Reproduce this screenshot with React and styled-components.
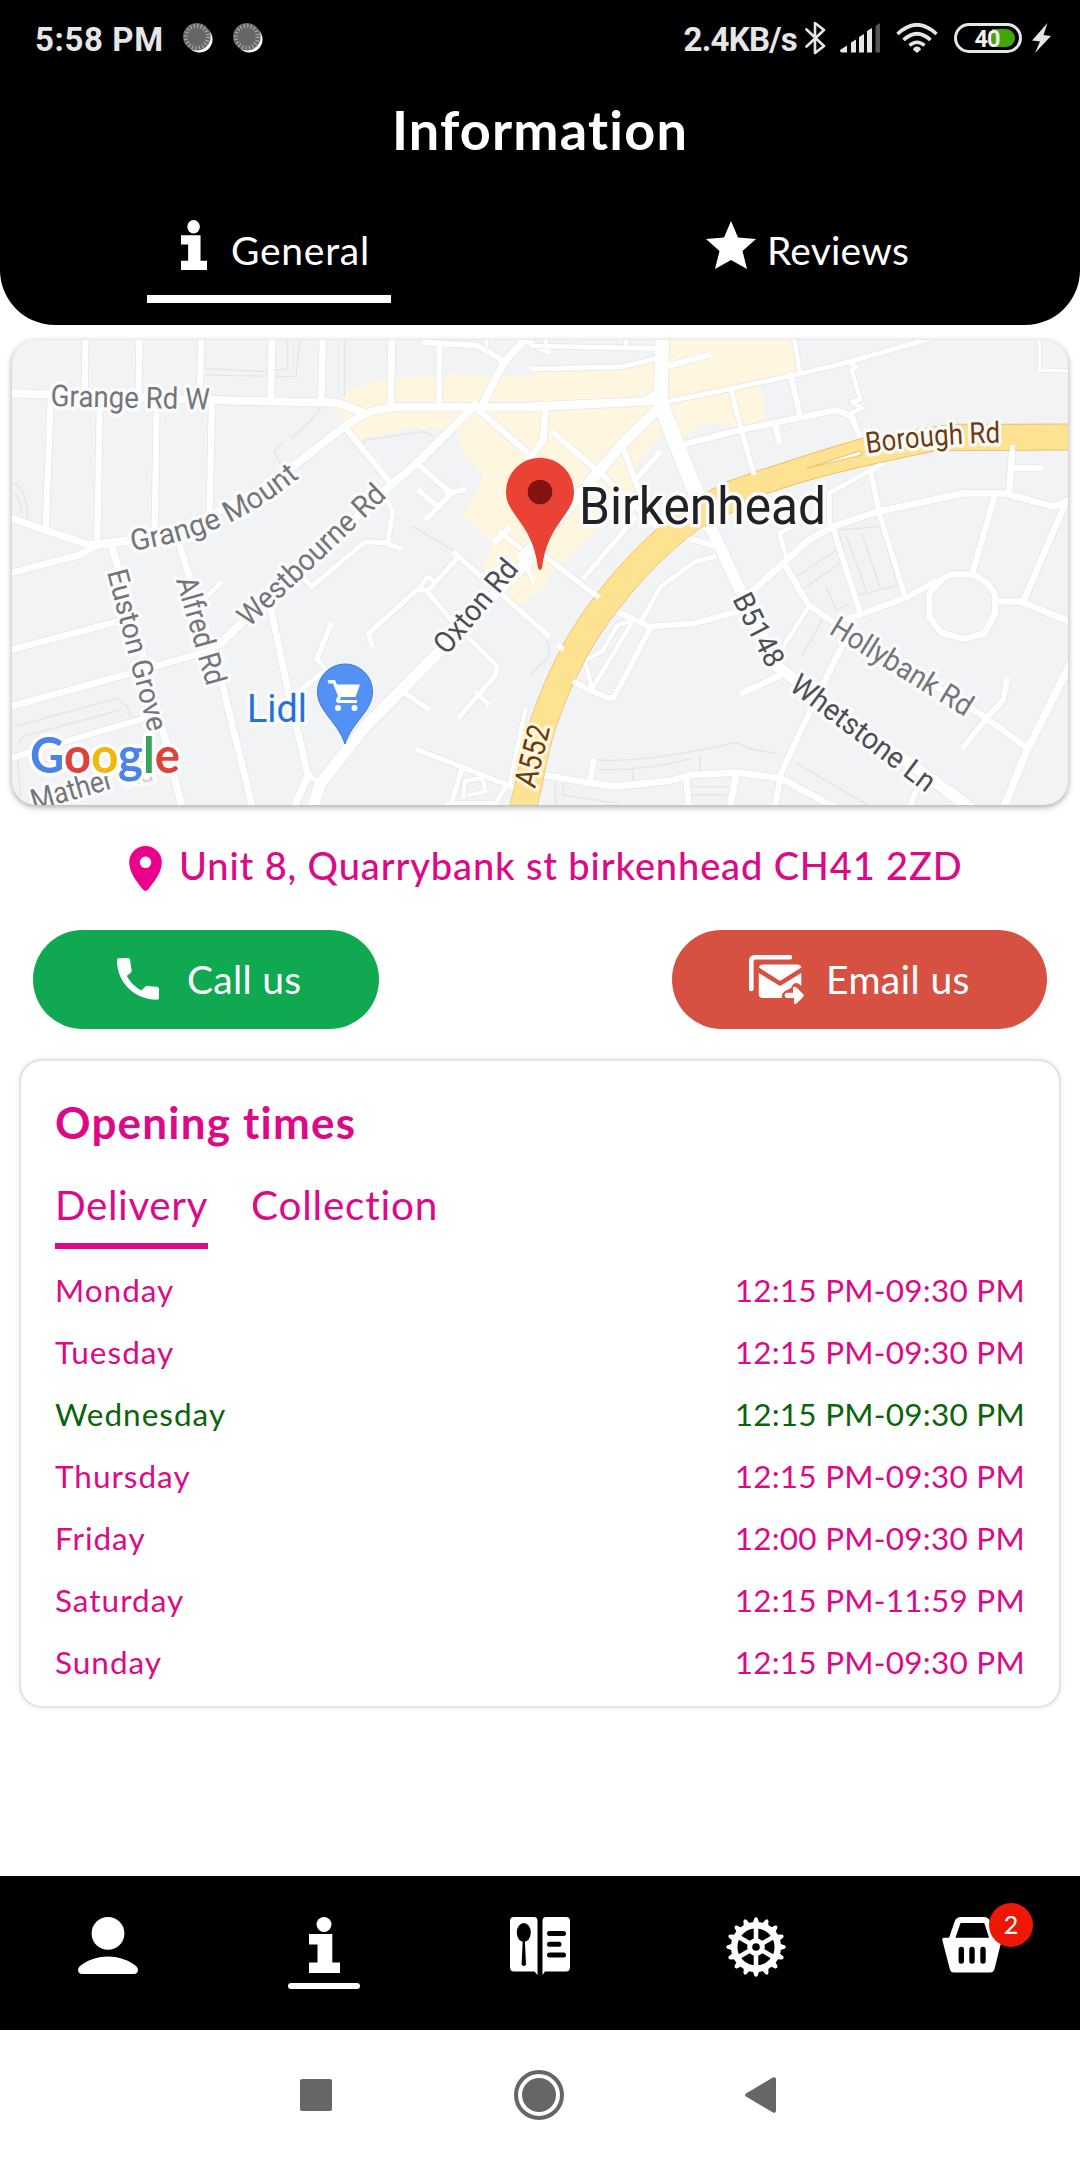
import React from "react";
import styled, { createGlobalStyle } from "styled-components";

const PINK = "#dc0a86";

const GlobalStyle = createGlobalStyle`
  * { box-sizing: border-box; }
  body { margin: 0; background: #fff; font-family: Lato, "Noto Sans", sans-serif; }
`;

const Page = styled.div`
  display: flex;
  flex-direction: column;
  width: 1080px;
  height: 2160px;
  overflow: hidden;
  background: #fff;
`;

const Label = styled.span`
  white-space: nowrap;
  font-variant-ligatures: none;
  letter-spacing: ${(p) => p.$track || 0}px;
`;

/* ---------- header ---------- */
const Header = styled.header`
  height: 325px;
  background: #000;
  color: #fff;
  border-radius: 0 0 55px 55px;
`;

const StatusBar = styled.div`
  display: flex;
  align-items: center;
  justify-content: space-between;
  height: 76px;
  padding: 0 29px 0 35px;
  font: 700 33px/40px Roboto, sans-serif;
  color: #e6e6e6;
`;

const StatusGroup = styled.div`
  display: flex;
  align-items: center;
  svg { display: block; flex: none; }
`;

const StatusText = styled(Label)`
  padding-top: 3px;
`;

const Spacer = styled.span`
  width: ${(p) => p.$w}px;
`;

const Title = styled.h1`
  margin: 0;
  padding-top: 2px;
  text-align: center;
  font-size: 54px;
  line-height: 104px;
  font-weight: 700;
`;

const Tabs = styled.nav`
  display: grid;
  grid-template-columns: 1fr 1fr;
  padding-right: 4px;
  justify-items: center;
`;

const Tab = styled.div`
  display: flex;
  align-items: center;
  width: 244px;
  height: 121px;
  padding: 22px 0 0 ${(p) => p.$pad}px;
  gap: ${(p) => p.$gap}px;
  border-bottom: 8px solid ${(p) => (p.$active ? "#fff" : "transparent")};
  font-size: 39px;
  svg { flex: none; margin-bottom: 10px; }
`;

/* ---------- body ---------- */
const MapCard = styled.section`
  height: 465px;
  margin: 15px 12px 0;
  border-radius: 24px;
  overflow: hidden;
  background: #f1f3f4;
  box-shadow: 0 2px 6px rgba(0, 0, 0, 0.35);
  flex: none;
  svg { display: block; }
`;

const Address = styled.div`
  display: flex;
  align-items: center;
  height: 119px;
  padding-left: 129px;
  gap: 17px;
  font-size: 38px;
  font-weight: 500;
  color: ${PINK};
  svg { margin-top: 8px; flex: none; }
`;

const Actions = styled.div`
  display: flex;
  justify-content: space-between;
  margin-top: 6px;
  padding: 0 33px;
`;

const PillButton = styled.button`
  display: flex;
  align-items: center;
  width: ${(p) => p.$w}px;
  height: 99px;
  padding: 0 0 1px ${(p) => p.$pad}px;
  gap: ${(p) => p.$gap}px;
  border: 0;
  border-radius: 50px;
  background: ${(p) => p.$bg};
  color: #fff;
  font: 400 39px Lato, sans-serif;
`;

const HoursCard = styled.section`
  margin: 32px 21px 0;
  padding: 31px 34px 13px 34px;
  border-radius: 21px;
  background: #fff;
  color: ${PINK};
  box-shadow: 0 0 0 2px #e4e4e4, 0 0 5px 3px #eee;
`;

const HoursTitle = styled.h2`
  margin: 0;
  font-size: 44px;
  line-height: 60px;
  font-weight: 700;
`;

const HoursTabs = styled.div`
  display: flex;
  gap: 43px;
  margin: 23px 0 10px;
`;

const HoursTab = styled.div`
  width: ${(p) => (p.$w ? `${p.$w}px` : "auto")};
  height: 74px;
  font-size: 40.5px;
  line-height: 60px;
  border-bottom: 6px solid ${(p) => (p.$active ? PINK : "transparent")};
`;

const DayRow = styled.div`
  display: flex;
  justify-content: space-between;
  font-size: 31.5px;
  line-height: 62px;
  color: ${(p) => (p.$today ? "#0a640a" : PINK)};
`;

/* ---------- footer ---------- */
const BottomNav = styled.nav`
  display: grid;
  grid-template-columns: repeat(5, 1fr);
  justify-items: center;
  align-items: start;
  flex: none;
  height: 154px;
  margin-top: auto;
  padding-top: 41px;
  background: #000;
`;

const NavItem = styled.div`
  position: relative;
  display: flex;
  flex-direction: column;
  align-items: center;
  gap: 10px;
  svg { display: block; }
`;

const ActiveBar = styled.span`
  width: 72px;
  height: 6px;
  border-radius: 3px;
  background: #fff;
`;

const Badge = styled.span`
  position: absolute;
  left: 47px;
  top: -14px;
  width: 44px;
  height: 44px;
  border-radius: 50%;
  background: #ee1704;
  color: #fff;
  text-align: center;
  font-size: 25px;
  line-height: 43px;
`;

const SystemBar = styled.div`
  display: flex;
  align-items: center;
  gap: 181.5px;
  flex: none;
  height: 130px;
  padding-left: 300px;
  background: #fff;
  svg { display: block; }
`;

/* ---------- icons ---------- */
const Bubble = () => (
  <svg width="30" height="30" viewBox="0 0 30 30">
    <circle cx="16.5" cy="16.5" r="13" fill="#fff" />
    <circle cx="13.8" cy="13.8" r="13.8" fill="#666" />
    <circle cx="13.8" cy="13.8" r="11" fill="none" stroke="#aaa" strokeWidth="4" strokeDasharray="1.2 2.26" />
  </svg>
);

const Bluetooth = () => (
  <svg width="21" height="34" viewBox="0 0 21 34" fill="none" stroke="#e6e6e6" strokeWidth="2.6">
    <path d="M1.5 8.5 L19 25 L10 32 V2 L19 9 L1.5 25.5" strokeLinejoin="round" strokeLinecap="round" />
  </svg>
);

const Signal = () => (
  <svg width="40" height="30" viewBox="0 0 40 30" fill="#e6e6e6">
    <path d="M0 27 L7 22.5 V29.5 H2 Q0 29.5 0 27Z M11 19.5 L16 16.5 V29.5 H11Z M19 14 L24 11 V29.5 H19Z M27 8 L32 5 V29.5 H27Z" />
    <path d="M35.500 3 L40 0 V29.500 H35.500Z" fill="#555" />
  </svg>
);

const Wifi = () => (
  <svg width="42" height="30" viewBox="0 0 42 30" fill="none" stroke="#e6e6e6" strokeWidth="3.6">
    <path d="M1.500 11 Q21 -7.500 40.500 11" />
    <path d="M7.500 17 Q21 4.500 34.500 17" />
    <path d="M13.500 22.500 Q21 16 28.500 22.500" />
    <path d="M17 26.500 A4.200 4.200 0 0 1 25 26.500 L21 30Z" fill="#e6e6e6" stroke="none" />
  </svg>
);

const Battery = () => (
  <svg width="68" height="30" viewBox="0 0 68 30">
    <rect x="1.500" y="1.500" width="65" height="27" rx="13.500" fill="none" stroke="#e6e6e6" strokeWidth="3" />
    <path d="M38 6 H52 A9 9 0 0 1 52 24 H38Z" fill="#43a608" />
    <text x="20.500" y="23.500" fontFamily="Roboto" fontWeight="700" fontSize="23.500" fill="#f0f0f0" textLength="26">40</text>
  </svg>
);

const Bolt = () => (
  <svg width="19" height="30" viewBox="0 0 19 30" fill="#e6e6e6">
    <path d="M15.500 0 L0 17.500 L8 18.500 L3 30 L19 13 L11.500 12Z" />
  </svg>
);

const InfoIcon = ({ w, h }) => (
  <svg width={w} height={h} viewBox="0 0 31 56" preserveAspectRatio="none" fill="#fff">
    <circle cx="15" cy="7.500" r="7.500" />
    <path d="M0 17 H23.300 V45.500 H31 V56 H0 V45.500 H8.500 V27.500 H0Z" />
  </svg>
);

const Star = () => (
  <svg width="50" height="48" viewBox="0 0 50 48" fill="#fff">
    <path d="M25 0 L32 16.500 L50 18 L36.500 30 L41 48 L25 39 L9 48 L13.500 30 L0 18 L18 16.500Z" />
  </svg>
);

const Pin = () => (
  <svg width="33" height="45" viewBox="0 0 33 45">
    <path fillRule="evenodd" fill="#eb008b" d="M16.500 0 A16.300 16.300 0 0 1 32.800 16.300 C32.800 26 26 35 18.800 43.800 Q16.500 46 14.200 43.800 C7 35 .2 26 .2 16.300 A16.300 16.300 0 0 1 16.500 0Z M16.500 10.500 A5.800 5.800 0 1 0 16.500 22.100 A5.800 5.800 0 1 0 16.500 10.500Z" />
  </svg>
);

const Phone = () => (
  <svg width="42" height="42" viewBox="0 0 42 42" fill="#fff">
    <path d="M2.500 0 H11 Q13 0 13.200 2 Q13.400 7.500 14.500 11 Q15 13 14 14.500 L9.800 18 C13.500 24.500 18 29 24.500 32.500 L28.500 28.500 Q29.800 27.400 31.500 28 Q35 28.800 40 28.800 Q42 29 42 31 V39.500 Q42 41.700 40 41.700 C18 41.700 0 25 0 2.500 Q0 0 2.500 0Z" />
  </svg>
);

const Mail = () => (
  <svg width="55" height="49" viewBox="0 0 55 49">
    <path d="M2.300 34 V6 Q2.300 2.300 6 2.300 H41" fill="none" stroke="#fff" strokeWidth="4.600" strokeLinecap="round" />
    <path d="M10 12.500 Q10.500 9.500 14 9.500 H48 Q52 9.500 52.300 12.500 L31 26Z" fill="#fff" />
    <path d="M9.800 18 L31 31 L52.300 18 V31 Q49 27 45 28.500 Q43 30 42 33 L36 36 Q32 39 33 43 H14 Q9.800 43 9.800 39Z" fill="#fff" />
    <path d="M38 37.800 H44 V32 Q46 31 48 33 L54 39 Q55.500 40.500 54 42 L48 48 Q46.500 49.500 45 48.500 V43 H38 Q35.500 42.500 35.500 40.300 Q35.500 38 38 37.800Z" fill="#fff" />
  </svg>
);

const Person = () => (
  <svg width="60" height="57" viewBox="0 0 60 57" fill="#fff">
    <circle cx="30" cy="16.400" r="16.400" />
    <path d="M30 39.500 C42 39.500 52 44 58 49 Q60 51 60 53 Q59.500 57 56 57 H4 Q.5 57 0 53 Q0 51 2 49 C8 44 18 39.500 30 39.500Z" />
  </svg>
);

const MenuBook = () => (
  <svg width="60" height="58" viewBox="0 0 60 58" fill="#fff">
    <path d="M4 0 H24 Q27.500 0 27.500 4 V58 L24.500 54.500 H4 Q0 54.500 0 50 V4 Q0 0 4 0Z" />
    <path d="M36 0 H56 Q60 0 60 4 V50 Q60 54.500 56 54.500 H35 L32.500 58 V4 Q32.500 0 36 0Z" />
    <ellipse cx="13.800" cy="15.500" rx="7" ry="9.500" fill="#000" />
    <path d="M12.800 22 H14.800 L16 47.500 Q13.800 50.500 11.600 47.500Z" fill="#000" />
    <path d="M39.500 16.500 H53.500 M39.500 27.300 H49 M39.500 38 H53.500" stroke="#000" strokeWidth="5" strokeLinecap="round" />
  </svg>
);

const Gear = () => {
  const teeth = Array.from({ length: 16 }, (_, i) => i * 22.5);
  const spokes = [0, 60, 120, 180, 240, 300];
  return (
    <svg width="60" height="60" viewBox="-30 -30 60 60" stroke="#fff" fill="none">
      <circle r="21.800" strokeWidth="6.500" />
      {teeth.map((a) => (
        <path key={a} d="M-3.600 -23 L-1.700 -28.600 Q0 -31 1.700 -28.600 L3.600 -23Z" fill="#fff" stroke="none" transform={`rotate(${a})`} />
      ))}
      {spokes.map((a) => (
        <path key={a} d="M0 -6 V-20" strokeWidth="4.600" transform={`rotate(${a})`} />
      ))}
      <circle r="6.300" strokeWidth="5" />
    </svg>
  );
};

const Basket = () => (
  <svg width="60" height="56" viewBox="0 0 60 56">
    <path d="M9.500 23 L15.500 5.500 Q16.300 3 19 3 H42 Q44.500 3 45.300 5.500 L51 23" fill="none" stroke="#fff" strokeWidth="6" />
    <path d="M1.500 20.800 H58.500 Q60 21 59.700 23 L52.500 52 Q51.500 55.500 48 55.500 H12 Q8.500 55.500 7.800 52 L.3 23 Q0 21 1.500 20.800Z" fill="#fff" />
    <path d="M19.300 32.500 V44 M30 32.500 V44 M41 32.500 V44" stroke="#000" strokeWidth="5.400" strokeLinecap="round" />
  </svg>
);

/* ---------- map ---------- */
/* Each tile keeps its roads as [width, path] in the tile's own grid. */
const TILE_W = [
  [24, "M20 190 L140 193 L600 210 L980 218 L1060 250"],
  [24, "M280 645 L400 627 Q640 570 850 410 L1000 290 L1060 250 Q1110 233 1160 230 L1590 230"],
  [18, "M248 15 L246 195"], [18, "M405 15 L402 200"], [18, "M584 15 L580 205"],
  [20, "M790 15 L786 215"], [19, "M937 15 L933 218"], [20, "M1138 15 L1134 232"],
  [17, "M1276 50 L1275 230"], [17, "M1235 38 L1385 46 L1465 95"], [10, "M1412 20 V45"],
  [22, "M1530 20 L1462 100 L1395 235"], [18, "M1520 30 L1590 65"],
  [18, "M147 200 L133 600"], [18, "M290 205 L282 640"], [18, "M455 215 L449 610"], [18, "M615 215 L608 570"],
  [22, "M20 560 L130 600 L260 645 L400 627"], [20, "M20 732 L230 675 L285 645"],
  [22, "M325 650 L345 720 L410 960 L480 1230 L530 1440"],
  [20, "M520 640 L640 1040 L735 1440"],
  [20, "M20 963 L350 872"], [20, "M20 1132 L380 1030 L600 965 L640 940"],
  [24, "M640 940 L720 860 L1130 470 L1210 400 L1380 225"],
  [18, "M20 1290 L110 1258 L420 1165"], [15, "M590 810 L640 760"],
  [18, "M1000 290 L1130 455"], [17, "M1210 400 L1310 490 L1240 565"], [17, "M1300 490 L1345 480"],
  [17, "M1220 485 L1265 525"], [15, "M1120 500 L1140 545 L1125 640 L1160 655"],
  [15, "M1125 638 L1060 635 L905 770 L882 745"],
  [20, "M785 830 L830 1050 L895 1340"], [22, "M895 1335 L850 1440"], [14, "M890 1340 L940 1355"],
  [34, "M905 1440 L930 1360 L1060 1190 L1270 970 L1590 630"],
  [16, "M960 885 L920 985 L945 1020 L855 1095"],
  [15, "M1330 680 L1245 780 L1210 780 L1070 910 L1080 945"], [14, "M1215 780 L1240 740 L1265 755"],
  [15, "M1240 785 L1310 870 L1445 1010 L1435 1040 L1335 1160"], [15, "M1385 1090 L1415 1120"],
  [16, "M1320 670 L1590 915"], [16, "M1170 1085 L1240 1135"], [20, "M1395 245 L1545 380"],
  [15, "M1215 1260 L1490 1372"], [13, "M1480 1360 L1525 1140"], [15, "M1340 1320 L1305 1440"],
  [13, "M1300 1420 L1440 1420 L1465 1375"], [12, "M1345 1400 L1350 1352 L1400 1345 L1410 1385 L1360 1395"],
  [16, "M1455 610 L1570 700"], [20, "M1440 632 L1475 598"], [16, "M1520 690 L1550 755"],
];

const TILE_E = [
  [26, "M-20 230 L330 213"], [14, "M-20 48 L340 55"], [15, "M-20 117 L240 110 L340 85"],
  [12, "M17 20 V50"], [12, "M250 20 V50"],
  [40, "M355 15 L350 230"], [18, "M365 110 L490 75"], [22, "M300 215 L350 180"],
  [15, "M370 215 L560 175 L760 130 L900 95 L1170 15"],
  [14, "M737 20 L755 130"], [17, "M728 135 L755 255"],
  [13, "M900 100 L920 112 L905 120 L930 208 L905 215 L935 235 L905 248"],
  [19, "M410 345 L580 300 L860 240 L905 260 L930 325"], [18, "M685 290 L695 335"], [15, "M555 180 L585 300 L620 430"],
  [46, "M350 220 L430 430 L490 580"],
  [34, "M490 580 L590 800 L690 1010 L830 1120 L1180 1380 L1270 1450"],
  [32, "M345 235 L250 330 L165 430 L60 560 L-50 680"],
  [18, "M40 310 L170 425 L350 600"], [18, "M240 350 L290 490"], [16, "M345 370 L285 440"],
  [15, "M275 565 L130 740"], [17, "M10 675 L165 800"], [20, "M15 240 L10 330 L-30 385"],
  [14, "M505 680 L450 695 L350 770 L290 880"], [17, "M228 848 L320 890 L450 880 L590 840"],
  [13, "M265 880 L155 1070"], [17, "M322 890 L215 1102 L195 1105 L95 1055"],
  [13, "M260 875 L225 885 L180 965 L130 990 L150 1070"], [18, "M430 625 L500 645"],
  [20, "M615 785 L780 630 L850 590 L980 545 L1230 490 L1350 490 L1490 530 L1550 505"],
  [14, "M990 403 L840 490 L840 590"], [16, "M960 420 L985 550 L1060 800"],
  [17, "M850 590 L930 850"], [14, "M715 680 L695 610 L730 590"], [18, "M900 865 L1070 800 L1145 755"],
  [19, "M1165 750 L1195 733 L1255 733 L1295 755 L1320 790 L1322 850 L1290 910 L1230 927 L1165 908 L1130 860 L1130 790 Z"],
  [18, "M1320 500 L1255 730"], [19, "M1525 520 L1403 815"], [20, "M1325 813 L1395 815 L1550 880"],
  [19, "M1372 350 L1362 490"], [18, "M1375 415 L1450 413"],
  [19, "M708 700 L780 825 L870 890 L1290 1160 L1412 1252"], [13, "M780 830 L700 960"],
  [18, "M890 920 L790 1130 L700 1330 L680 1440"], [23, "M1550 980 L1412 1265 L1340 1450"],
  [17, "M1355 1050 L1345 1110 L1300 1160 L1230 1250"], [19, "M690 1040 L590 1087"],
  [20, "M-20 1330 L140 1358 L220 1370 L380 1352 L440 1335 L570 1328 L700 1345 L870 1440"],
  [20, "M570 1330 L550 1440"], [19, "M425 1345 L432 1440"], [17, "M1100 1360 L1070 1440"],
  [18, "M155 1295 L145 1355"], [10, "M1450 15 L1450 120 L1550 123"],
];

const LANES_W = "M590 115 L775 125 M595 135 L860 140 L870 30 M835 30 V115 L775 125 M1000 30 V200 M930 235 L905 270 L845 325 M1055 345 L1060 330 L1230 305 L1260 320 M820 410 L795 365 L820 340 M1200 590 L1330 670 M40 1190 L340 1105 L370 1130 L380 1165 M55 1240 L65 1220 L350 1140 M50 1270 L60 1400 M80 1300 L200 1290 M1540 1035 L1568 1005 M35 460 Q75 460 80 560 M40 490 Q60 500 62 550";
const LANES_E = "M165 1290 Q300 1300 570 1238 Q620 1265 685 1268 M170 1318 Q300 1325 440 1285 M270 1310 V1355 M465 1275 V1320 M745 1300 L960 1430 M70 1355 L65 1395 L230 1420 M45 1350 V1430 M440 1370 H550 M440 1395 H545 M870 600 L990 590 M890 620 L950 790 M935 610 L990 780 M990 590 L1040 770 M730 750 L860 660 M760 780 L870 700 M830 770 L860 840 L900 820 M910 800 L1040 765 M760 980 L830 850 M20 930 Q40 980 0 1005 M870 610 L890 700";

const AREA_W = "M1010 180 L1120 145 L1300 135 L1310 122 L1330 138 L1590 140 L1590 760 L1510 825 L1400 715 L1430 640 L1345 555 L1405 440 L1340 360 L1325 300 L1180 295 L1050 330 L975 240Z";
const AREA_E = "M-20 120 L240 120 L340 95 L375 25 L735 25 L755 130 L640 160 L655 265 L590 295 L480 275 L410 330 L355 310 L280 400 L290 500 L180 580 L90 680 L-20 770Z";

const A552 = "M-55 1460 L-30 1350 Q-10 1230 20 1150 Q90 950 200 810 Q350 610 530 505";

const Tile = ({ x, roads, lanes, area }) => (
  <g transform={`translate(${x} 330) scale(.34444 .33333)`} fill="none" strokeLinejoin="round">
    <path d={area} fill="#fef6de" />
    <path d={lanes} stroke="#e3e6e9" strokeWidth="4" />
    {roads.map(([w, d], i) => (
      <path key={i} d={d} stroke="#e2e5e8" strokeWidth={w + 4} />
    ))}
    {roads.map(([w, d], i) => (
      <path key={i} d={d} stroke="#fff" strokeWidth={w} strokeLinecap="round" />
    ))}
  </g>
);

const MapText = styled.text`
  font-family: ${(p) => p.$family || "Roboto"}, sans-serif;
  font-weight: ${(p) => p.$weight || 400};
  font-size: ${(p) => p.$size || 30}px;
  fill: ${(p) => p.$fill || "#72767a"};
  stroke: ${(p) => p.$halo || "#fbfbfc"};
  stroke-width: 7px;
  stroke-linejoin: round;
  paint-order: stroke;
`;

const Street = ({ x, y, a = 0, len, children, ...rest }) => (
  <MapText transform={`translate(${x} ${y}) rotate(${a})`} textLength={len} lengthAdjust="spacingAndGlyphs" {...rest}>
    {children}
  </MapText>
);

const StreetMap = () => (
  <svg width="1056" height="465" viewBox="12 340 1056 465">
    <defs>
      <path id="grange" d="M132 551 C172 545 203 535 225 525 C252 512 272 500 305 473" />
      <path id="borough" d="M867 453.500 C910 447 955 443 1012 442.500" />
    </defs>
    <Tile x={0} roads={TILE_W} lanes={LANES_W} area={AREA_W} />
    <Tile x={540} roads={TILE_E} lanes={LANES_E} area={AREA_E} />
    <g transform="translate(540 330) scale(.34444 .33333)" fill="none" strokeLinejoin="round">
      <path d={A552} stroke="#eec06a" strokeWidth="80" />
      <path d="M530 460 Q720 390 950 320 L1200 283 L1550 282 V360 L1150 362 Q820 430 660 490 L480 590Z" fill="#fde292" stroke="#eec06a" strokeWidth="3" />
      <path d={A552} stroke="#fde292" strokeWidth="76" />
      <path d="M500 530 L640 460" stroke="#fde292" strokeWidth="70" />
      <path d="M775 415 L930 362 L935 375 Z" fill="#fff" stroke="#eec06a" strokeWidth="3" />
      <path d="M1372 345 V370 M990 403 L960 425 M620 425 V435 M225 845 L260 862 M95 1052 L120 1066 M150 785 L172 803 M50 945 L68 958" stroke="#fff" strokeWidth="14" />
    </g>

    <Street x={50.5} y={406} a={1.3} len={159}>Grange Rd W</Street>
    <MapText $size={29.5}><textPath href="#grange" textLength="186" lengthAdjust="spacingAndGlyphs">Grange Mount</textPath></MapText>
    <Street x={249} y={628} a={-43.5} len={191}>Westbourne Rd</Street>
    <Street x={447} y={656} a={-50} len={113} $fill="#4b4e52">Oxton Rd</Street>
    <Street x={107} y={572} a={75.5} len={166} $size={29}>Euston Grove</Street>
    <Street x={176} y={580} a={74} len={111}>Alfred Rd</Street>
    <Street x={34} y={811} a={-16} len={84}>Mather</Street>
    <Street x={125} y={786} a={-10} len={30} $fill="#cfd1d3" $size={26}>Rd</Street>
    <MapText $size={29.5} $fill="#6e3a0c"><textPath href="#borough" textLength="134" lengthAdjust="spacingAndGlyphs">Borough Rd</textPath></MapText>
    <Street x={732} y={599} a={63} len={79} $fill="#4b4e52" $size={29}>B5148</Street>
    <Street x={828} y={633} a={31.500} len={161}>Hollybank Rd</Street>
    <Street x={788} y={689} a={37} len={173} $fill="#4b4e52">Whetstone Ln</Street>
    <Street x={535} y={789} a={-76} len={63} $size={31} $fill="#6e3a0c" $halo="#fff6dc">A552</Street>

    <Street x={247} y={722} len={60} $size={39.5} $fill="#2571dc">Lidl</Street>
    <path d="M345 664 A27.500 27.500 0 0 1 372.500 692 C372.500 711 352 722 345 744 C338 722 317.500 711 317.500 692 A27.500 27.500 0 0 1 345 664Z" fill="#5491f5" stroke="#3f78d8" strokeWidth="1" />
    <g fill="#fff">
      <path d="M327.500 680 H335 L337 684.500 H360 L355.500 697 H341 L340 700 H357 V703 H338 Q335 702 336.500 698.500 L338 696 L333 683.500 H328.500Z" />
      <circle cx="338" cy="708" r="3" />
      <circle cx="354.500" cy="708" r="3" />
    </g>

    <MapText x="30" y="773" textLength="150" lengthAdjust="spacingAndGlyphs" $size={50} $family="Lato" $weight={700} $halo="#fff">
      <tspan fill="#4a84ea">G</tspan><tspan fill="#df4238">o</tspan><tspan fill="#f2b70c">o</tspan><tspan fill="#4a84ea">g</tspan><tspan fill="#35a556">l</tspan><tspan fill="#df4238">e</tspan>
    </MapText>

    <path d="M540 457.700 A34 34 0 0 1 574 492 C574 503 569 509 562 519 C552 533 545 545 542 568 Q540 572 538 568 C535 545 528 533 518 519 C511 509 506 503 506 492 A34 34 0 0 1 540 457.700Z" fill="#ea4335" />
    <circle cx="540" cy="492" r="12.300" fill="#811411" />
    <Street x={579} y={524} len={247} $size={51} $fill="#202124">Birkenhead</Street>
  </svg>
);

const HOURS = [
  ["Monday", "12:15 PM-09:30 PM"],
  ["Tuesday", "12:15 PM-09:30 PM"],
  ["Wednesday", "12:15 PM-09:30 PM"],
  ["Thursday", "12:15 PM-09:30 PM"],
  ["Friday", "12:00 PM-09:30 PM"],
  ["Saturday", "12:15 PM-11:59 PM"],
  ["Sunday", "12:15 PM-09:30 PM"],
];

export default function App() {
  return (
    <Page>
      <GlobalStyle />
      <Header>
        <StatusBar>
          <StatusGroup>
            <StatusText $track={0.6}>5:58 PM</StatusText>
            <Spacer $w={19} />
            <Bubble />
            <Spacer $w={20} />
            <Bubble />
          </StatusGroup>
          <StatusGroup>
            <StatusText $track={-0.75}>2.4KB/s</StatusText>
            <Spacer $w={8} />
            <Bluetooth />
            <Spacer $w={14} />
            <Signal />
            <Spacer $w={16} />
            <Wifi />
            <Spacer $w={16} />
            <Battery />
            <Spacer $w={10} />
            <Bolt />
          </StatusGroup>
        </StatusBar>
        <Title><Label $track={1.2}>Information</Label></Title>
        <Tabs>
          <Tab $active $pad={34} $gap={24}>
            <InfoIcon w={26} h={50} />
            <Label $track={0.75}>General</Label>
          </Tab>
          <Tab $pad={21} $gap={11}>
            <Star />
            <Label $track={0.2}>Reviews</Label>
          </Tab>
        </Tabs>
      </Header>

      <MapCard><StreetMap /></MapCard>

      <Address>
        <Pin />
        <Label $track={0.87}>Unit 8, Quarrybank st birkenhead CH41 2ZD</Label>
      </Address>

      <Actions>
        <PillButton $w={346} $pad={84} $gap={28} $bg="#10a952">
          <Phone />
          <Label $track={0.3}>Call us</Label>
        </PillButton>
        <PillButton $w={375} $pad={77} $gap={22} $bg="#d75142">
          <Mail />
          <Label $track={0.4}>Email us</Label>
        </PillButton>
      </Actions>

      <HoursCard>
        <HoursTitle><Label $track={1.2}>Opening times</Label></HoursTitle>
        <HoursTabs>
          <HoursTab $active $w={153}><Label $track={0.55}>Delivery</Label></HoursTab>
          <HoursTab><Label $track={0.8}>Collection</Label></HoursTab>
        </HoursTabs>
        {HOURS.map(([day, time]) => (
          <DayRow key={day} $today={day === "Wednesday"}>
            <Label $track={1}>{day}</Label>
            <Label $track={0.25}>{time}</Label>
          </DayRow>
        ))}
      </HoursCard>

      <BottomNav>
        <NavItem><Person /></NavItem>
        <NavItem><InfoIcon w={31} h={56} /><ActiveBar /></NavItem>
        <NavItem><MenuBook /></NavItem>
        <NavItem><Gear /></NavItem>
        <NavItem><Basket /><Badge>2</Badge></NavItem>
      </BottomNav>

      <SystemBar>
        <svg width="32" height="32"><rect width="32" height="32" rx="2" fill="#666" /></svg>
        <svg width="50" height="50" viewBox="0 0 50 50">
          <circle cx="25" cy="25" r="23" fill="none" stroke="#666" strokeWidth="4" />
          <circle cx="25" cy="25" r="17" fill="#666" />
        </svg>
        <svg width="31" height="36" viewBox="0 0 31 36">
          <path d="M1 16.500 L28 .5 Q31 -.5 31 2 V34 Q31 36.500 28 35.500 L1 19.500 Q-1 18 1 16.500Z" fill="#666" />
        </svg>
      </SystemBar>
    </Page>
  );
}
